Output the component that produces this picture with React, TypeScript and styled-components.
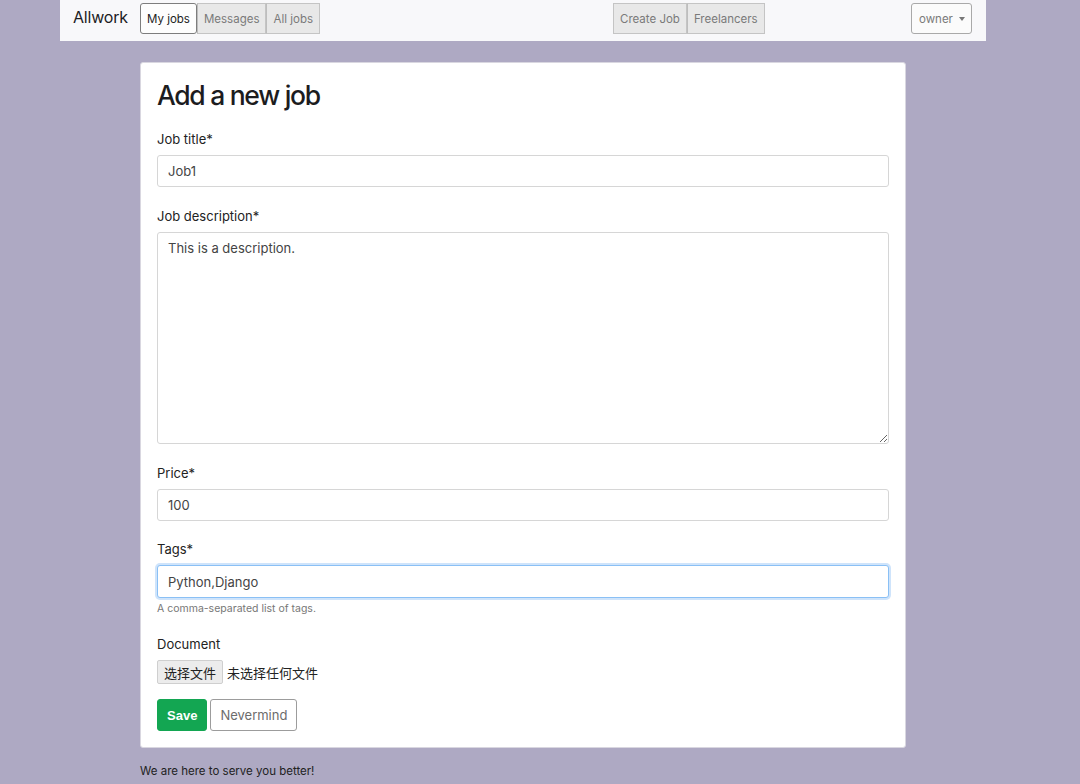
import styled, { createGlobalStyle } from "styled-components";

const GlobalStyle = createGlobalStyle`
  html, body {
    margin: 0;
    padding: 0;
    background: #aea9c3;
    font-family: Inter, "Noto Sans", "Noto Sans CJK SC", sans-serif;
    color: #212529;
  }
  * { box-sizing: border-box; }
`;

const Page = styled.div`
  width: 1080px;
  min-height: 784px;
  background: #aea9c3;
`;

const NavBar = styled.nav`
  width: 926px;
  height: 41px;
  margin-left: 60px;
  background: #f8f8fa;
  display: flex;
  align-items: flex-start;
  padding: 3px 14px 0 13px;
`;

const Brand = styled.div`
  font-size: 16px;
  line-height: 29px;
  color: #1d1d1f;
  width: 67px;
  letter-spacing: -0.2px;
`;

const Group = styled.div<{ $offset?: number }>`
  display: flex;
  margin-left: ${(p) => p.$offset ?? 0}px;
`;

const NavButton = styled.button<{ $active?: boolean }>`
  height: 31px;
  padding: 0 6px;
  font-family: inherit;
  font-size: 11.5px;
  color: ${(p) => (p.$active ? "#222" : "#7a7a7a")};
  background: ${(p) => (p.$active ? "#fdfdfd" : "#e8e8e8")};
  border: 1px solid ${(p) => (p.$active ? "#7d7d7d" : "#c4c4c4")};
  border-radius: ${(p) => (p.$active ? "3px" : "0")};
  & + & {
    border-left-color: #bdbdbd;
  }
`;

const Spacer = styled.div`
  flex: 1;
`;

const Dropdown = styled.button`
  height: 31px;
  width: 61px;
  padding: 0 0 0 7px;
  text-align: left;
  font-family: inherit;
  font-size: 11.5px;
  color: #7a7a7a;
  background: #fbfbfb;
  border: 1px solid #a9a9a9;
  border-radius: 3px;
  &::after {
    content: "";
    display: inline-block;
    margin-left: 6px;
    vertical-align: 2px;
    border-top: 4px solid #777;
    border-left: 3.5px solid transparent;
    border-right: 3.5px solid transparent;
  }
`;

const Card = styled.main`
  width: 766px;
  margin: 21px 0 0 140px;
  background: #fff;
  border-radius: 3px;
  border: 1px solid #d9d7e0;
  padding: 14px 16px 16px 16px;
`;

const Title = styled.h1`
  margin: 0 0 16px;
  font-size: 26.5px;
  font-weight: 500;
  line-height: 36px;
  letter-spacing: -1.3px;
  color: #1c1c1e;
`;

const Field = styled.div<{ $gap?: number }>`
  margin-bottom: ${(p) => p.$gap ?? 19}px;
`;

const Label = styled.label`
  display: block;
  font-size: 13px;
  line-height: 20px;
  margin-bottom: 6px;
  color: #222;
`;

const TextInput = styled.input<{ $focus?: boolean }>`
  display: block;
  width: 100%;
  height: ${(p) => (p.$focus ? 33 : 32)}px;
  padding: 0 10px;
  font-family: inherit;
  font-size: 13px;
  color: #444;
  border: 1px solid ${(p) => (p.$focus ? "#8ac0f5" : "#d6d6d6")};
  border-radius: 3px;
  box-shadow: ${(p) => (p.$focus ? "0 0 0 2px #cfe4fb" : "none")};
  outline: none;
`;

const TextArea = styled.textarea`
  display: block;
  width: 100%;
  height: 212px;
  padding: 6px 10px;
  font-family: inherit;
  font-size: 13px;
  line-height: 18px;
  color: #444;
  border: 1px solid #d6d6d6;
  border-radius: 3px;
  resize: vertical;
  outline: none;
`;

const Help = styled.small`
  display: block;
  margin-top: 4px;
  font-size: 10.5px;
  color: #777;
`;

const FileRow = styled.div`
  display: flex;
  align-items: center;
  gap: 4px;
  font-size: 13px;
  color: #222;
`;

const FileButton = styled.span`
  height: 24px;
  padding: 0 6px;
  display: flex;
  align-items: center;
  background: #ececec;
  border: 1px solid #cfcfcf;
  border-radius: 2px;
  font-size: 13px;
`;

const Actions = styled.div`
  display: flex;
  gap: 3px;
`;

const ActionButton = styled.button<{ $primary?: boolean }>`
  height: 32px;
  padding: 0 9px;
  font-family: ${(p) => (p.$primary ? '"Liberation Sans", Arial, sans-serif' : "inherit")};
  font-size: 13px;
  font-weight: ${(p) => (p.$primary ? 700 : 400)};
  color: ${(p) => (p.$primary ? "#fff" : "#6c6c6c")};
  background: ${(p) => (p.$primary ? "#13a652" : "#fff")};
  border: 1px solid ${(p) => (p.$primary ? "#13a652" : "#9c9c9c")};
  border-radius: 3px;
`;

const Footer = styled.footer`
  margin: 16px 0 0 140px;
  font-size: 11.5px;
  color: #222;
`;

export default function App() {
  return (
    <Page>
      <GlobalStyle />
      <NavBar>
        <Brand>Allwork</Brand>
        <Group>
          <NavButton $active>My jobs</NavButton>
          <NavButton>Messages</NavButton>
          <NavButton>All jobs</NavButton>
        </Group>
        <Group $offset={293}>
          <NavButton>Create Job</NavButton>
          <NavButton>Freelancers</NavButton>
        </Group>
        <Spacer />
        <Dropdown>owner</Dropdown>
      </NavBar>

      <Card>
        <Title>Add a new job</Title>
        <Field>
          <Label>Job title*</Label>
          <TextInput defaultValue="Job1" />
        </Field>
        <Field $gap={19}>
          <Label>Job description*</Label>
          <TextArea defaultValue="This is a description." />
        </Field>
        <Field $gap={18}>
          <Label>Price*</Label>
          <TextInput defaultValue="100" />
        </Field>
        <Field $gap={19}>
          <Label>Tags*</Label>
          <TextInput $focus defaultValue="Python,Django" />
          <Help>A comma-separated list of tags.</Help>
        </Field>
        <Field $gap={15}>
          <Label>Document</Label>
          <FileRow>
            <FileButton>选择文件</FileButton>
            未选择任何文件
          </FileRow>
        </Field>
        <Actions>
          <ActionButton $primary>Save</ActionButton>
          <ActionButton>Nevermind</ActionButton>
        </Actions>
      </Card>

      <Footer>We are here to serve you better!</Footer>
    </Page>
  );
}
